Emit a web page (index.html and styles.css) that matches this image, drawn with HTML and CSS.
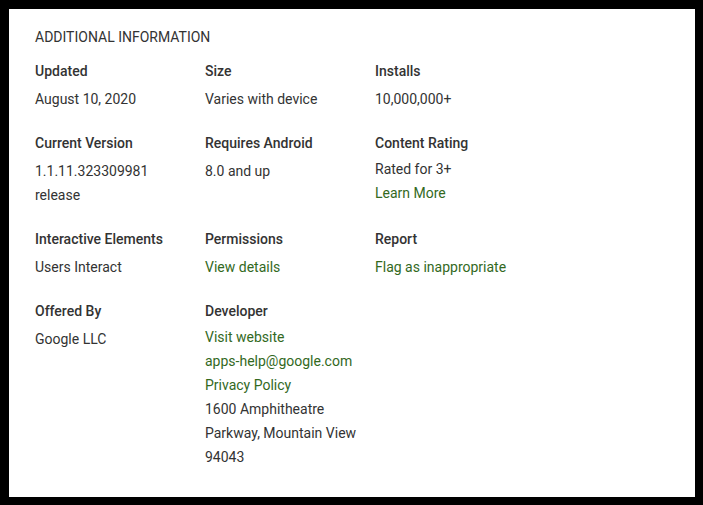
FILE: index.html
```
<!DOCTYPE html>
<html>
<head>
    <title>Additional Information</title>
    <link rel="stylesheet" href="styles.css">
</head>
<body>
    <div class="card">
        <h2 class="title">ADDITIONAL INFORMATION</h2>
        <div class="info-grid">
            <div class="item">
                <div class="label">Updated</div>
                <div class="value">August 10, 2020</div>
            </div>
            <div class="item">
                <div class="label">Size</div>
                <div class="value">Varies with device</div>
            </div>
            <div class="item">
                <div class="label">Installs</div>
                <div class="value">10,000,000+</div>
            </div>

            <div class="item">
                <div class="label">Current Version</div>
                <div class="value">1.1.11.323309981<br>release</div>
            </div>
            <div class="item">
                <div class="label">Requires Android</div>
                <div class="value">8.0 and up</div>
            </div>
            <div class="item">
                <div class="label">Content Rating</div>
                <div class="value raised">
                    <div>Rated for 3+</div>
                    <a href="#" class="link">Learn More</a>
                </div>
            </div>

            <div class="item">
                <div class="label">Interactive Elements</div>
                <div class="value">Users Interact</div>
            </div>
            <div class="item">
                <div class="label">Permissions</div>
                <div class="value"><a href="#" class="link">View details</a></div>
            </div>
            <div class="item">
                <div class="label">Report</div>
                <div class="value lowered"><a href="#" class="link">Flag as inappropriate</a></div>
            </div>

            <div class="item">
                <div class="label">Offered By</div>
                <div class="value">Google LLC</div>
            </div>
            <div class="item">
                <div class="label">Developer</div>
                <div class="value raised">
                    <div><a href="#" class="link">Visit website</a></div>
                    <div><a href="#" class="link">apps-help@google.com</a></div>
                    <div><a href="#" class="link">Privacy Policy</a></div>
                    <div>1600 Amphitheatre<br>Parkway, Mountain View<br>94043</div>
                </div>
            </div>
        </div>
    </div>
</body>
</html>
```

FILE: styles.css
```
body {
    margin: 0;
    padding: 9px 8px 8px 9px;
    background-color: #000000;
    font-family: Roboto, "Liberation Sans", sans-serif;
    color: #333333;
}

.card {
    height: 488px;
    box-sizing: border-box;
    padding: 16px 26px;
    background-color: #ffffff;
}

.title {
    margin: 0 0 10px 0;
    font-size: 14px;
    font-weight: 400;
    line-height: 24px;
    color: #333333;
}

.info-grid {
    display: grid;
    grid-template-columns: 170px 170px 170px;
    row-gap: 20px;
}

.label {
    margin-bottom: 4px;
    font-size: 14px;
    font-weight: 500;
    line-height: 24px;
}

.value {
    font-size: 14px;
    line-height: 24px;
}

.raised {
    margin-top: -2px;
}

.lowered {
    margin-top: 1px;
}

.link {
    color: #33691e;
    text-decoration: none;
}
```
